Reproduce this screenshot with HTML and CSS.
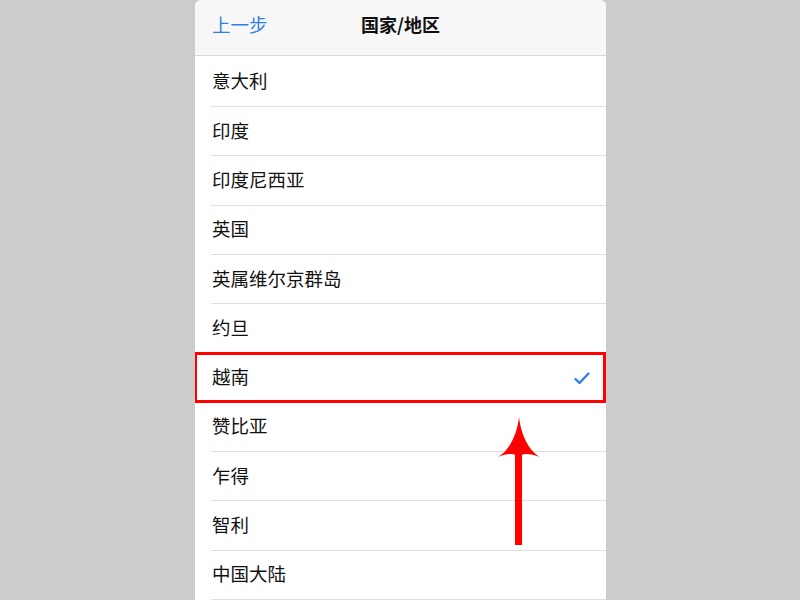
FILE: index.html
```html
<!DOCTYPE html>
<html lang="zh">
<head>
<meta charset="utf-8">
<link rel="stylesheet" href="styles.css">
</head>
<body>
<div class="phone">
  <header class="nav">
    <span class="back">上一步</span>
    <span class="title">国家/地区</span>
  </header>
  <ul class="list">
    <li class="row">意大利</li>
    <li class="row">印度</li>
    <li class="row">印度尼西亚</li>
    <li class="row">英国</li>
    <li class="row">英属维尔京群岛</li>
    <li class="row">约旦</li>
    <li class="row selected">越南
      <svg class="check" width="16" height="13" viewBox="0 0 16 13"><polyline points="1.5,7 5.5,11 14.5,1.5" fill="none" stroke="#2f7ff0" stroke-width="2.4" stroke-linecap="round" stroke-linejoin="round"/></svg>
      <span class="highlight"></span>
    </li>
    <li class="row">赞比亚</li>
    <li class="row">乍得</li>
    <li class="row">智利</li>
    <li class="row">中国大陆</li>
  </ul>
  <svg class="arrow" width="46" height="132" viewBox="0 0 46 132">
    <path d="M23 0 C25 18 33 34 44 40 C36 37 29 36 26 38 L26 128 L19 128 L19 38 C16 36 9 37 2 40 C13 34 21 18 23 0 Z" fill="#ff0000"/>
  </svg>
</div>
</body>
</html>
```

FILE: styles.css
```css
html, body {
  margin: 0;
  padding: 0;
  background: #cccccc;
  height: 600px;
  overflow: hidden;
}
.phone {
  position: relative;
  width: 411px;
  margin-left: 195px;
  height: 600px;
  background: #ffffff;
  overflow: hidden;
  border-radius: 6px 6px 0 0;
  font-family: "Noto Sans CJK SC", "Noto Sans", sans-serif;
}
.nav {
  position: relative;
  height: 56px;
  box-sizing: border-box;
  padding: 0 0 7px 17px;
  background: #f7f7f7;
  border-bottom: 1px solid #d9d9d9;
  display: flex;
  align-items: center;
}
.back {
  color: #2f80e8;
  font-size: 18.5px;
}
.title {
  position: absolute;
  left: 0;
  right: 0;
  top: 0;
  height: 49px;
  line-height: 49px;
  text-align: center;
  font-weight: bold;
  font-size: 18px;
  color: #111;
  pointer-events: none;
}
.list {
  list-style: none;
  margin: 0;
  padding: 1.7px 0 0 16px;
}
.row {
  position: relative;
  height: 49.3px;
  box-sizing: border-box;
  border-bottom: 1px solid #e0e0e0;
  display: flex;
  align-items: center;
  padding: 0 0 3px 1px;
  font-size: 18.5px;
  color: #111;
}
.check {
  position: absolute;
  right: 16px;
  top: 19px;
}
.highlight {
  position: absolute;
  left: -17px;
  right: 0;
  top: -1px;
  bottom: -1px;
  border: 3px solid #ff0000;
}
.arrow {
  position: absolute;
  left: 301px;
  top: 417px;
}
```
